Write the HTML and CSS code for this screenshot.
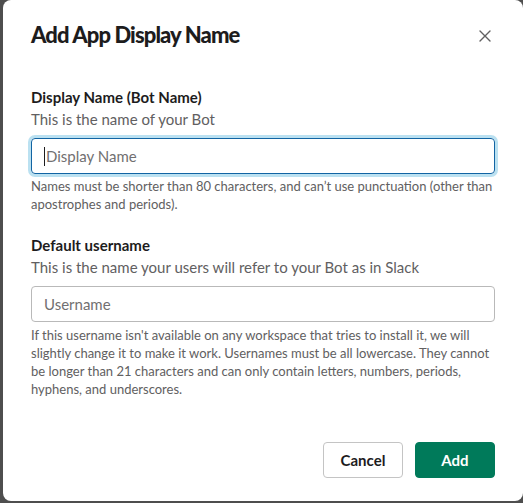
FILE: index.html
```html
<!DOCTYPE html>
<html lang="en">
<head>
<meta charset="utf-8">
<title>Add App Display Name</title>
<link rel="stylesheet" href="styles.css">
</head>
<body>
<div class="overlay">
  <div class="modal">
    <header class="modal-header">
      <h1 class="modal-title">Add App Display Name</h1>
      <button class="close-btn" aria-label="Close">
        <svg width="12" height="12" viewBox="0 0 12 12"><path d="M1 1 L11 11 M11 1 L1 11" stroke="#616061" stroke-width="1.4" stroke-linecap="round" fill="none"/></svg>
      </button>
    </header>
    <div class="modal-body">
      <div class="field">
        <div class="label">Display Name (Bot Name)</div>
        <div class="desc">This is the name of your Bot</div>
        <div class="input focused"><span class="placeholder">Display Name</span></div>
        <div class="hint">Names must be shorter than 80 characters, and can’t use punctuation (other than apostrophes and periods).</div>
      </div>
      <div class="field">
        <div class="label">Default username</div>
        <div class="desc">This is the name your users will refer to your Bot as in Slack</div>
        <div class="input"><span class="placeholder">Username</span></div>
        <div class="hint hint-wide">If this username isn't available on any workspace that tries to install it, we will slightly change it to make it work. Usernames must be all lowercase. They cannot be longer than 21 characters and can only contain letters, numbers, periods, hyphens, and underscores.</div>
      </div>
    </div>
    <footer class="modal-footer">
      <button class="btn btn-secondary">Cancel</button>
      <button class="btn btn-primary">Add</button>
    </footer>
  </div>
</div>
</body>
</html>
```

FILE: styles.css
```css
* { box-sizing: border-box; }
html, body { margin: 0; padding: 0; }
body {
  background: #4e4e4e;
  font-family: Lato, "Noto Sans", "Liberation Sans", sans-serif;
  color: #1d1c1d;
  width: 523px;
  height: 503px;
  overflow: hidden;
}
.overlay {
  padding-left: 3px;
  height: 503px;
}
.modal {
  background: #fff;
  width: 520px;
  height: 501px;
  border-radius: 8px;
  display: flex;
  flex-direction: column;
}
.modal-header {
  display: flex;
  align-items: center;
  justify-content: space-between;
  padding: 20px 28px 16px 28px;
}
.modal-title {
  margin: 0;
  font-size: 22px;
  line-height: 30px;
  font-weight: 900;
  letter-spacing: -0.9px;
}
.close-btn {
  border: 0;
  background: none;
  padding: 0;
  width: 12px;
  height: 12px;
  margin-right: 4px;
  margin-top: 2px;
  display: flex;
}
.modal-body {
  padding: 20px 28px 0 28px;
  flex: 1;
}
.field { margin-bottom: 21px; }
.label {
  font-size: 15px;
  line-height: 22px;
  font-weight: 700;
}
.desc {
  font-size: 15px;
  line-height: 22px;
  color: #616061;
}
.input {
  margin-top: 8px;
  height: 36px;
  border: 1px solid #b9b9b9;
  border-radius: 4px;
  padding: 0 12px;
  display: flex;
  align-items: center;
  font-size: 15px;
  position: relative;
}
.input.focused {
  border-color: #1264a3;
  box-shadow: 0 0 0 3px rgba(29, 155, 209, 0.3);
}
.input.focused::before {
  content: "";
  width: 1px;
  height: 19px;
  background: #1d1c1d;
  margin-right: 1px;
}
.placeholder { color: #717071; }
.hint {
  margin-top: 3px;
  font-size: 13px;
  line-height: 18px;
  color: #616061;
}
.hint-wide { margin-top: 4px; }
.modal-footer {
  display: flex;
  justify-content: flex-end;
  gap: 12px;
  padding: 0 28px 23px 28px;
}
.btn {
  font-family: inherit;
  font-size: 15px;
  font-weight: 700;
  width: 80px;
  height: 36px;
  border-radius: 4px;
  padding: 0;
  cursor: pointer;
}
.btn-secondary {
  background: #fff;
  color: #1d1c1d;
  border: 1px solid #c4c4c4;
}
.btn-primary {
  background: #007a5a;
  color: #fff;
  border: 1px solid #007a5a;
}
```
